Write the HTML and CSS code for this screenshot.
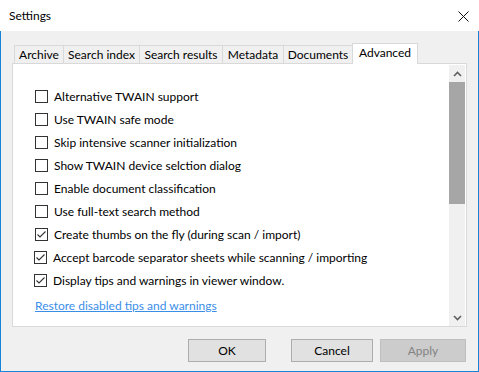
FILE: index.html
```html
<!DOCTYPE html>
<html lang="en">
<head>
  <meta charset="UTF-8">
  <meta name="viewport" content="width=device-width, initial-scale=1.0">
  <title>Settings</title>
  <link rel="stylesheet" href="styles.css">
</head>
<body>
  <div class="window">
    <div class="titlebar">
      <span class="title">Settings</span>
      <svg class="close" width="11" height="11" viewBox="0 0 11 11"><path d="M0.5 0.5L10.5 10.5M10.5 0.5L0.5 10.5" stroke="#111" stroke-width="1" fill="none"/></svg>
    </div>
    <div class="main">
      <div class="tabs">
        <div class="tab first w-archive">Archive</div>
        <div class="tab w-index">Search index</div>
        <div class="tab w-results">Search results</div>
        <div class="tab w-meta">Metadata</div>
        <div class="tab w-docs">Documents</div>
        <div class="tab active w-adv">Advanced</div>
      </div>
      <div class="panel">
        <div class="options">
          <label class="row"><span class="box"></span>Alternative TWAIN support</label>
          <label class="row"><span class="box"></span>Use TWAIN safe mode</label>
          <label class="row"><span class="box"></span>Skip intensive scanner initialization</label>
          <label class="row"><span class="box"></span>Show TWAIN device selction dialog</label>
          <label class="row"><span class="box"></span>Enable document classification</label>
          <label class="row"><span class="box"></span>Use full-text search method</label>
          <label class="row"><span class="box checked"><svg width="11" height="11" viewBox="0 0 11 11"><path d="M1.5 5.5L4 8L9.5 2.5" stroke="#333" stroke-width="1.1" fill="none"/></svg></span>Create thumbs on the fly (during scan / import)</label>
          <label class="row shift"><span class="box checked"><svg width="11" height="11" viewBox="0 0 11 11"><path d="M1.5 5.5L4 8L9.5 2.5" stroke="#333" stroke-width="1.1" fill="none"/></svg></span>Accept barcode separator sheets while scanning / importing</label>
          <label class="row shift"><span class="box checked"><svg width="11" height="11" viewBox="0 0 11 11"><path d="M1.5 5.5L4 8L9.5 2.5" stroke="#333" stroke-width="1.1" fill="none"/></svg></span>Display tips and warnings in viewer window.</label>
          <a class="restore" href="javascript:;">Restore disabled tips and warnings</a>
        </div>
        <div class="scrollbar">
          <div class="arrow"><svg width="9" height="6" viewBox="0 0 9 6"><path d="M1 5L4.5 1.5L8 5" stroke="#606060" stroke-width="1.6" fill="none"/></svg></div>
          <div class="thumb"></div>
          <div class="track"></div>
          <div class="arrow"><svg width="9" height="6" viewBox="0 0 9 6"><path d="M1 1L4.5 4.5L8 1" stroke="#606060" stroke-width="1.6" fill="none"/></svg></div>
        </div>
      </div>
      <div class="buttons">
        <button class="btn w-ok">OK</button>
        <button class="btn w-cancel">Cancel</button>
        <button class="btn disabled w-apply">Apply</button>
      </div>
    </div>
  </div>
</body>
</html>
```

FILE: styles.css
```css
*{
  margin: 0px;
  padding: 0px;
  box-sizing: border-box;
}
body{
  font-family: "Lato", "Liberation Sans", sans-serif;
  font-size: 12px;
  color: #000000;
}
.window{
  width: 479px;
  height: 372px;
  display: flex;
  flex-direction: column;
}
.titlebar{
  height: 31px;
  background-color: #ffffff;
  display: flex;
  align-items: center;
  padding-left: 9px;
  padding-right: 10px;
}
.title{
  flex: 1;
  padding-bottom: 1px;
}
.close{
  display: block;
  margin-top: 1px;
}
.main{
  flex: 1;
  background-color: #f0f0f0;
  border: 1px solid #1883d7;
  border-top: none;
  display: flex;
  flex-direction: column;
}
.tabs{
  display: flex;
  align-items: flex-end;
  height: 32px;
  margin-left: 13px;
  position: relative;
  z-index: 1;
}
.tab{
  height: 18px;
  line-height: 17px;
  text-align: center;
  border-top: 1px solid #d9d9d9;
  border-right: 1px solid #d9d9d9;
  background-color: #f0f0f0;
}
.tab.first{
  border-left: 1px solid #d9d9d9;
}
.tab.active{
  height: 21px;
  line-height: 17px;
  margin-bottom: -1px;
  margin-left: -1px;
  border-left: 1px solid #d9d9d9;
  background-color: #ffffff;
}
.w-archive{ width: 50px; }
.w-index{ width: 76px; }
.w-results{ width: 83px; }
.w-meta{ width: 61px; }
.w-docs{ width: 69px; }
.w-adv{ width: 66px; }
.panel{
  height: 264px;
  margin-left: 11px;
  width: 455px;
  background-color: #ffffff;
  border: 1px solid #d9d9d9;
  display: flex;
}
.options{
  flex: 1;
  padding-top: 21px;
  padding-left: 22px;
  display: flex;
  flex-direction: column;
}
.row{
  height: 23px;
  display: flex;
  align-items: center;
}
.row.shift{
  margin-left: -1px;
}
.box{
  width: 13px;
  height: 13px;
  border: 1px solid #333333;
  margin-right: 6px;
  display: flex;
  align-items: center;
  justify-content: center;
}
.box svg{
  display: block;
}
.restore{
  color: #3b8ee8;
  margin-top: 6px;
  align-self: flex-start;
}
.scrollbar{
  width: 16px;
  margin: 1px 1px 0px 0px;
  height: 261px;
  background-color: #f0f0f0;
  display: flex;
  flex-direction: column;
}
.arrow{
  height: 17px;
  display: flex;
  align-items: center;
  justify-content: center;
}
.thumb{
  height: 122px;
  background-color: #a6a6a6;
}
.track{
  flex: 1;
}
.buttons{
  display: flex;
  margin-top: 12px;
  padding-left: 187px;
}
.btn{
  height: 23px;
  font-family: "Lato", "Liberation Sans", sans-serif;
  font-size: 12px;
  color: #000000;
  background-color: #e1e1e1;
  border: 1px solid #adadad;
}
.w-ok{ width: 78px; margin-right: 25px; }
.w-cancel{ width: 82px; margin-right: 7px; }
.w-apply{ width: 86px; }
.btn.disabled{
  background-color: #cccccc;
  border-color: #bfbfbf;
  color: #838383;
}
```
